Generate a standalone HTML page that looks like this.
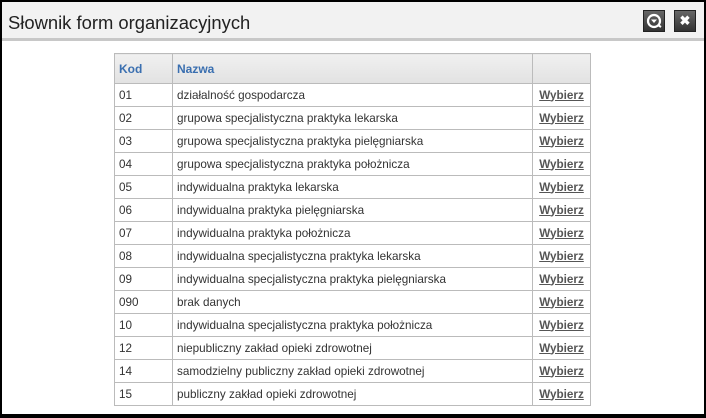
<!DOCTYPE html>
<html><head><style>
*{margin:0;padding:0;box-sizing:border-box}
body{width:706px;height:418px;background:#000;overflow:hidden;font-family:"Liberation Sans",sans-serif}
.win{position:absolute;left:2px;top:2px;width:702px;height:412px;background:#fff}
.title{height:39px;background:#f2f2f2;border-bottom:3px solid #c8c8c8;position:relative}
.title h1{font-weight:normal;font-size:18.4px;color:#222;position:absolute;left:6px;top:10px}
.btn{position:absolute;top:8px;width:22px;height:22px;background:linear-gradient(#666,#333);border:1px solid #222;color:#fff;text-align:center;font-weight:bold;font-size:13px;line-height:20px}
table{position:absolute;left:112px;top:51px;border-collapse:collapse;font-size:11.7px;color:#333}
td,th{border:1px solid #bbb;height:23px;padding:0 4px;text-align:left}
th{height:30px;background:linear-gradient(#f0f0f0,#e2e2e2);color:#3a6fb0;font-weight:bold;font-size:12px}
td.w{font-weight:bold;color:#555;text-decoration:underline;text-align:center;padding:0 3px}
</style></head><body>
<div class="win">
<div class="title"><h1>Słownik form organizacyjnych</h1>
<div class="btn" style="left:641px"><svg width="20" height="20" viewBox="0 0 20 20"><circle cx="10" cy="10" r="6" fill="none" stroke="#fff" stroke-width="2.2"/><path d="M7 8.5h6l-3 3.5z" fill="#fff"/><path d="M14 14l3 2" stroke="#fff" stroke-width="2"/></svg></div>
<div class="btn" style="left:672px">✖</div>
</div>
<table>
<tr><th style="width:58px">Kod</th><th style="width:360px">Nazwa</th><th style="width:58px"></th></tr>
<tr><td>01</td><td>działalność gospodarcza</td><td class="w">Wybierz</td></tr>
<tr><td>02</td><td>grupowa specjalistyczna praktyka lekarska</td><td class="w">Wybierz</td></tr>
<tr><td>03</td><td>grupowa specjalistyczna praktyka pielęgniarska</td><td class="w">Wybierz</td></tr>
<tr><td>04</td><td>grupowa specjalistyczna praktyka położnicza</td><td class="w">Wybierz</td></tr>
<tr><td>05</td><td>indywidualna praktyka lekarska</td><td class="w">Wybierz</td></tr>
<tr><td>06</td><td>indywidualna praktyka pielęgniarska</td><td class="w">Wybierz</td></tr>
<tr><td>07</td><td>indywidualna praktyka położnicza</td><td class="w">Wybierz</td></tr>
<tr><td>08</td><td>indywidualna specjalistyczna praktyka lekarska</td><td class="w">Wybierz</td></tr>
<tr><td>09</td><td>indywidualna specjalistyczna praktyka pielęgniarska</td><td class="w">Wybierz</td></tr>
<tr><td>090</td><td>brak danych</td><td class="w">Wybierz</td></tr>
<tr><td>10</td><td>indywidualna specjalistyczna praktyka położnicza</td><td class="w">Wybierz</td></tr>
<tr><td>12</td><td>niepubliczny zakład opieki zdrowotnej</td><td class="w">Wybierz</td></tr>
<tr><td>14</td><td>samodzielny publiczny zakład opieki zdrowotnej</td><td class="w">Wybierz</td></tr>
<tr><td>15</td><td>publiczny zakład opieki zdrowotnej</td><td class="w">Wybierz</td></tr>
</table>
</div>
</body></html>
